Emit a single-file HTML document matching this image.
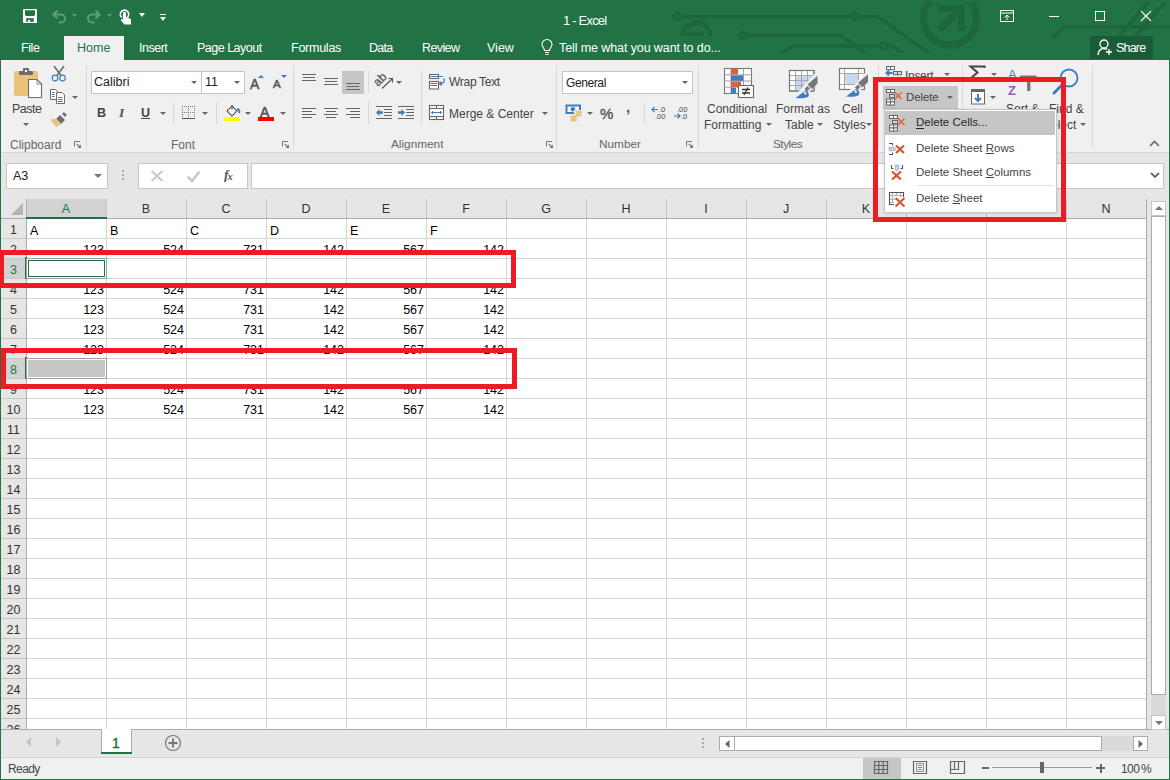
<!DOCTYPE html>
<html><head><meta charset="utf-8">
<style>
*{margin:0;padding:0;box-sizing:border-box}
html,body{width:1170px;height:780px;overflow:hidden}
body{position:relative;background:#f0f0f0;font-family:"Liberation Sans",sans-serif;font-size:12px;color:#444}
.a{position:absolute}
.t{position:absolute;white-space:nowrap;line-height:1}
svg{position:absolute;overflow:visible}
#title{left:0;top:0;width:1170px;height:60px;background:#217346}
#ribbon{left:0;top:60px;width:1170px;height:93px;background:#f0f0f0;border-bottom:1px solid #d5d5d5}
#fbar{left:0;top:153px;width:1170px;height:46px;background:#e6e6e6}
#hdr{left:0;top:199px;width:1147px;height:19px;background:#e6e6e6}
#grid{left:26px;top:218px;width:1121px;height:511px;background:#fff}
#tabs{left:0;top:729px;width:1170px;height:28px;background:#e6e6e6;border-top:1px solid #ababab}
#status{left:0;top:757px;width:1170px;height:23px;background:#f0f0f0;border-top:1px solid #d5d5d5}
#lb{left:0;top:60px;width:1px;height:720px;background:#217346}
#rb{left:1169px;top:60px;width:1px;height:720px;background:#217346}
#bb{left:0;top:779px;width:1170px;height:1px;background:#217346}
.tab{color:#fff;font-size:12.5px}
.sep{position:absolute;width:1px;background:#dadada}
.lbl{color:#666;font-size:12px}
.rt{color:#444;font-size:12.5px}
.cell{position:absolute;font-size:12.5px;color:#000;text-align:right;width:78px;line-height:1}
.rh{position:absolute;left:1px;width:25px;text-align:center;font-size:12.5px;color:#444;line-height:1}
.ch{position:absolute;top:203px;width:80px;text-align:center;font-size:12.5px;color:#444;line-height:1}
.red{position:absolute;border:5px solid #ed1c24}
.dd{position:absolute;width:0;height:0;border-left:3px solid transparent;border-right:3px solid transparent;border-top:3px solid #666}

</style></head><body>
<div id="title" class="a"></div>
<svg style="left:0;top:0" width="1170" height="60" viewBox="0 0 1170 60">
 <defs><clipPath id="tc"><rect x="0" y="2" width="1170" height="51"/></clipPath><clipPath id="tc2"><rect x="0" y="2" width="1170" height="36"/></clipPath></defs>
 <g stroke="#1e663d" stroke-width="3.6" fill="none" clip-path="url(#tc)" stroke-linejoin="round">
  <circle cx="677" cy="16.5" r="3.2" stroke-width="3"/><path d="M680.5 16.5H850.5"/><circle cx="854.4" cy="16.5" r="3.2" stroke-width="3"/><path d="M858 16.5H877.7L940 61"/>
  <path d="M683 35.9A13.5 13.5 0 0 1 710 35.9" stroke-width="5"/><path d="M687 34H704" stroke-width="4"/>
  <circle cx="742.6" cy="35.3" r="3.2" stroke-width="3"/><path d="M746 35.3H840.6L869 56"/>
  <path d="M777 56L792.7 46H879.6"/><circle cx="883.4" cy="46" r="3.2" stroke-width="3"/><path d="M887 46H893L908 57"/>
  <circle cx="950" cy="18.7" r="26.5" stroke-width="7"/>
  <path d="M939 30L961.5 8.5" stroke-width="7"/><path d="M938 8.5H961.5V31" stroke-width="7" stroke-linejoin="miter"/>
 </g>
 <g stroke="#1e663d" stroke-width="3.6" fill="none" clip-path="url(#tc2)">
  <path d="M1049 41L1064.7 27H1170M1150 0L1116 40M1167 0L1132 40"/>
 </g>
</svg>
<!-- QAT -->
<svg style="left:23px;top:9px" width="14" height="14" viewBox="0 0 14 14"><rect x="0" y="0" width="14" height="14" rx="0.8" fill="#fff"/><path d="M2 1.3H12V6L11 7H3L2 6Z" fill="#217346"/><rect x="3.2" y="9.2" width="7.6" height="3.6" fill="#217346"/><rect x="5" y="11" width="2.2" height="1.8" fill="#fff"/></svg>
<svg style="left:52px;top:9px" width="27" height="14" viewBox="0 0 27 14"><path d="M2.5 5.5H9A4 4 0 0 1 9 13.5H6.5M5.5 1.5L1.5 5.5L5.5 9.5" fill="none" stroke="#5f9c7a" stroke-width="2"/><path d="M20 5l2.5 3l2.5-3z" fill="#5f9c7a"/></svg>
<svg style="left:86px;top:9px" width="27" height="14" viewBox="0 0 27 14"><path d="M12.5 5.5H6A4 4 0 0 0 6 13.5H8.5M9.5 1.5L13.5 5.5L9.5 9.5" fill="none" stroke="#5f9c7a" stroke-width="2"/><path d="M21 5l2.5 3l2.5-3z" fill="#5f9c7a"/></svg>
<svg style="left:118px;top:8px" width="14" height="17" viewBox="0 0 14 17"><path d="M3.8 9.5A4.2 4.2 0 1 1 9.2 9.5" fill="none" stroke="#fff" stroke-width="1.6"/><path d="M5 4.5Q6.5 3 8 4.5V9L12 10.5Q13 11 13 12.5V16.5H6.5L3 12.5Q2.5 11 4 11L5 11.5Z" fill="#fff"/></svg>
<svg style="left:139px;top:13px" width="6" height="4" viewBox="0 0 6 4"><path d="M0 0H6L3 4Z" fill="#fff"/></svg>
<div class="a" style="left:160px;top:14px;width:6px;height:1px;background:#fff"></div>
<svg style="left:160px;top:17px" width="6" height="4" viewBox="0 0 6 4"><path d="M0 0H6L3 4Z" fill="#fff"/></svg>
<div class="t" style="left:563px;top:14px;color:#fff;font-size:13px;letter-spacing:-0.8px">1 - Excel</div>
<!-- window controls -->
<svg style="left:1000px;top:10px" width="14" height="12" viewBox="0 0 14 12"><rect x="0.5" y="0.5" width="13" height="11" fill="none" stroke="#fff"/><path d="M0.5 3H13.5" stroke="#fff"/><path d="M7 10V5M4.5 7.5L7 5L9.5 7.5" fill="none" stroke="#fff"/></svg>
<div class="a" style="left:1049px;top:16px;width:10px;height:1px;background:#fff"></div>
<div class="a" style="left:1095px;top:11px;width:10px;height:10px;border:1px solid #fff"></div>
<svg style="left:1141px;top:11px" width="10" height="10" viewBox="0 0 10 10"><path d="M0 0L10 10M10 0L0 10" stroke="#fff" stroke-width="1.1"/></svg>
<!-- tabs -->
<div class="t tab" style="left:21px;top:42px;letter-spacing:-0.4px">File</div>
<div class="a" style="left:64px;top:36px;width:60px;height:25px;background:#f0f0f0"></div>
<div class="t tab" style="left:77px;top:42px;color:#217346">Home</div>
<div class="t tab" style="left:139px;top:42px;letter-spacing:-0.5px">Insert</div>
<div class="t tab" style="left:197px;top:42px;letter-spacing:-0.5px">Page Layout</div>
<div class="t tab" style="left:291px;top:42px;letter-spacing:-0.25px">Formulas</div>
<div class="t tab" style="left:369px;top:42px;letter-spacing:-0.7px">Data</div>
<div class="t tab" style="left:422px;top:42px;letter-spacing:-0.6px">Review</div>
<div class="t tab" style="left:487px;top:42px">View</div>
<svg style="left:541px;top:40px" width="12" height="16" viewBox="0 0 12 16"><path d="M3.5 10.5C3.5 8 1 7 1 4.5A5 5 0 0 1 11 4.5C11 7 8.5 8 8.5 10.5Z" fill="none" stroke="#fff" stroke-width="1.1"/><path d="M4 12.5H8M4.5 14.5H7.5" stroke="#fff" stroke-width="1.1"/></svg>
<div class="t tab" style="left:559px;top:42px;letter-spacing:-0.1px">Tell me what you want to do...</div>
<div class="a" style="left:1090px;top:36px;width:63px;height:23px;background:#1a5c37"></div>
<svg style="left:1097px;top:39px" width="16" height="17" viewBox="0 0 16 17"><circle cx="7" cy="5" r="4" fill="none" stroke="#fff" stroke-width="1.3"/><path d="M1 16C1.5 11 4 9.5 7 9.5C8.5 9.5 9.5 10 10 10.5" fill="none" stroke="#fff" stroke-width="1.3"/><path d="M12 10V16M9 13H15" stroke="#fff" stroke-width="1.3"/></svg>
<div class="t tab" style="left:1116px;top:42px;letter-spacing:-0.8px">Share</div>
<div id="ribbon" class="a"></div>
<!-- Clipboard -->
<svg style="left:13px;top:67px" width="30" height="32" viewBox="0 0 30 32">
 <rect x="1" y="4" width="24" height="25" rx="2" fill="#ebc27c"/>
 <rect x="6" y="4" width="14" height="4" rx="1" fill="#6d6d6d"/>
 <rect x="10" y="1" width="6" height="4" rx="1" fill="#6d6d6d"/>
 <rect x="12" y="3" width="2" height="2" fill="#fff"/>
 <path d="M15.5 12.5H24L28.5 17V30.5H15.5Z" fill="#fff" stroke="#6d6d6d" stroke-width="1.1"/>
 <path d="M24 12.5V17H28.5" fill="none" stroke="#6d6d6d" stroke-width="0.8"/>
</svg>
<div class="t rt" style="left:12px;top:103px;letter-spacing:-0.5px">Paste</div>
<div class="dd" style="left:23px;top:123px"></div>
<svg style="left:51px;top:65px" width="16" height="17" viewBox="0 0 16 17">
 <path d="M3 1L10 10.5M13 1L6 10.5" stroke="#6d6d6d" stroke-width="1.6"/>
 <circle cx="4" cy="13" r="2.8" fill="none" stroke="#3f7dbf" stroke-width="1.2"/>
 <circle cx="11.5" cy="13" r="2.8" fill="none" stroke="#3f7dbf" stroke-width="1.2"/>
</svg>
<svg style="left:50px;top:89px" width="16" height="16" viewBox="0 0 16 16">
 <path d="M0.5 0.5H5.5L7.5 2.5V10.5H0.5Z" fill="#fff" stroke="#6d6d6d"/>
 <path d="M6.5 3.5H12L14.5 6V14.5H6.5Z" fill="#fff" stroke="#6d6d6d"/>
 <path d="M2 3.5H4.5M2 5.5H4.5M2 7.5H4.5M8 8.5H12.5M8 10.5H12.5M8 12.5H12.5" stroke="#3f7dbf" stroke-width="1"/>
</svg>
<div class="dd" style="left:72px;top:96px"></div>
<svg style="left:50px;top:112px" width="17" height="16" viewBox="0 0 17 16">
 <path d="M10 3L15 8L11 12L6 7Z" fill="#6d6d6d"/>
 <path d="M13 1L16 4" stroke="#6d6d6d" stroke-width="2.5"/>
 <path d="M6 6.5L11.5 12L6.5 15L0 7.5Z" fill="#ebc27c"/>
</svg>
<div class="t lbl" style="left:10px;top:139px">Clipboard</div>
<svg style="left:74px;top:141px" width="8" height="8" viewBox="0 0 8 8"><path d="M0.5 5.5V0.5H6" fill="none" stroke="#777"/><path d="M3 3L6 6" stroke="#777" stroke-width="1.2"/><path d="M3.5 7H7V3.5Z" fill="#777"/></svg>
<div class="sep" style="left:86px;top:65px;height:83px"></div>
<!-- Font -->
<div class="a" style="left:91px;top:71px;width:111px;height:23px;background:#fff;border:1px solid #c6c6c6"></div>
<div class="t rt" style="left:94px;top:76px;color:#222">Calibri</div>
<div class="dd" style="left:191px;top:81px"></div>
<div class="a" style="left:201px;top:71px;width:44px;height:23px;background:#fff;border:1px solid #c6c6c6"></div>
<div class="t rt" style="left:205px;top:76px;color:#222">11</div>
<div class="dd" style="left:234px;top:81px"></div>
<div class="t" style="left:250px;top:77px;font-size:14px;color:#555;-webkit-text-stroke:0.5px #555">A</div>
<svg style="left:258px;top:75px" width="6" height="3" viewBox="0 0 6 3"><path d="M0 3L3 0L6 3Z" fill="#3f7dbf"/></svg>
<div class="t" style="left:273px;top:79px;font-size:11.5px;color:#555;-webkit-text-stroke:0.5px #555">A</div>
<svg style="left:281px;top:75px" width="6" height="3" viewBox="0 0 6 3"><path d="M0 0L3 3L6 0Z" fill="#3f7dbf"/></svg>
<div class="t" style="left:97px;top:107px;font-size:12.5px;font-weight:bold;color:#444">B</div>
<div class="t" style="left:119px;top:106px;font-size:13.5px;font-style:italic;font-weight:bold;font-family:'Liberation Serif',serif;color:#555">I</div>
<div class="t" style="left:141px;top:107px;font-size:12.5px;font-weight:bold;color:#444">U</div>
<div class="a" style="left:141px;top:118px;width:9px;height:1px;background:#444"></div>
<div class="dd" style="left:160px;top:112px"></div>
<div class="sep" style="left:173px;top:102px;height:22px"></div>
<svg style="left:182px;top:106px" width="14" height="14" viewBox="0 0 14 14">
 <path d="M0.5 0V12M6.5 0V12M12.5 0V12M0 0.5H13M0 6.5H13" fill="none" stroke="#777" stroke-dasharray="1 1"/>
 <path d="M0 12.5H13" stroke="#555"/>
</svg>
<div class="dd" style="left:202px;top:112px"></div>
<div class="sep" style="left:216px;top:102px;height:22px"></div>
<svg style="left:224px;top:104px" width="17" height="17" viewBox="0 0 17 17">
 <path d="M8 2L13 7L8 12L3 7Z" fill="#fff" stroke="#555" stroke-width="1.1"/>
 <path d="M8 1V6" stroke="#555"/>
 <path d="M13 5C15 5 16 7 15 9" fill="none" stroke="#3f7dbf" stroke-width="2"/>
 <rect x="0" y="13" width="16" height="4" fill="#ffff00"/>
</svg>
<div class="dd" style="left:245px;top:112px"></div>
<div class="t" style="left:260px;top:105px;font-size:14px;color:#555;-webkit-text-stroke:0.6px #555">A</div>
<div class="a" style="left:258px;top:117px;width:16px;height:4px;background:#ff0000"></div>
<div class="dd" style="left:280px;top:112px"></div>
<div class="t lbl" style="left:171px;top:139px">Font</div>
<svg style="left:282px;top:141px" width="8" height="8" viewBox="0 0 8 8"><path d="M0.5 5.5V0.5H6" fill="none" stroke="#777"/><path d="M3 3L6 6" stroke="#777" stroke-width="1.2"/><path d="M3.5 7H7V3.5Z" fill="#777"/></svg>
<div class="sep" style="left:293px;top:65px;height:83px"></div>
<!-- Alignment -->
<svg style="left:300px;top:70px" width="66" height="52" viewBox="0 0 66 52">
 <rect x="42" y="1" width="22" height="23" fill="#c6c6c6"/>
 <g stroke="#666" stroke-width="1.2">
 <path d="M2 4.5H16M3 7.5H15M2 10.5H16"/>
 <path d="M24 8.5H38M25 11.5H37M24 14.5H38"/>
 <path d="M46 13.5H60M47 16.5H59M46 19.5H60"/>
 <path d="M2 38.5H16M2 41.5H12M2 44.5H16M2 47.5H12"/>
 <path d="M24 38.5H38M26 41.5H36M24 44.5H38M26 47.5H36"/>
 <path d="M46 38.5H60M50 41.5H60M46 44.5H60M50 47.5H60"/>
 </g>
</svg>
<div class="sep" style="left:368px;top:71px;height:22px"></div>
<div class="sep" style="left:368px;top:101px;height:23px"></div>
<svg style="left:375px;top:73px" width="20" height="17" viewBox="0 0 20 17">
 <text x="0" y="0" transform="translate(3 14) rotate(-45)" font-family="Liberation Sans" font-size="12" fill="#555" stroke="#555" stroke-width="0.3" style="-webkit-font-smoothing:antialiased">ab</text>
 <path d="M7 15.5L17 6M13.5 5.5H17.5V9.5" fill="none" stroke="#555" stroke-width="1.1"/>
</svg>
<div class="dd" style="left:396px;top:81px"></div>
<svg style="left:375px;top:105px" width="40" height="15" viewBox="0 0 40 15">
 <g stroke="#666" stroke-width="1.1"><path d="M1 1.5H17M9 4.5H17M9 7.5H17M9 10.5H17M1 13.5H17"/>
 <path d="M23 1.5H39M31 4.5H39M31 7.5H39M31 10.5H39M23 13.5H39"/></g>
 <path d="M1 7.5L4.5 4V6.2H8V8.8H4.5V11Z" fill="#3f7dbf"/>
 <path d="M30 7.5L26.5 4V6.2H23V8.8H26.5V11Z" fill="#3f7dbf"/>
</svg>
<div class="sep" style="left:421px;top:70px;height:55px"></div>
<svg style="left:428px;top:73px" width="18" height="17" viewBox="0 0 18 17">
 <rect x="1.5" y="1.5" width="9" height="4" fill="#fff" stroke="#666" stroke-width="1.1"/>
 <rect x="1.5" y="8.5" width="9" height="7.5" fill="#fff" stroke="#666" stroke-width="1.1"/>
 <path d="M2.5 3.5H15M2.5 10.5H9M2.5 12.5H9" stroke="#3f7dbf" stroke-width="1"/>
 <path d="M15.5 5.5C17 7 16.5 10.5 13.5 10.5H11.5M13.5 8.5L11.5 10.5L13.5 12.5" fill="none" stroke="#3f7dbf" stroke-width="1.3"/>
</svg>
<div class="t rt" style="left:449px;top:76px;font-size:12px;letter-spacing:-0.3px">Wrap Text</div>
<svg style="left:428px;top:104px" width="17" height="17" viewBox="0 0 17 17">
 <rect x="1.5" y="1.5" width="14" height="14" fill="#fff" stroke="#666" stroke-width="1.1"/>
 <path d="M1.5 4.5H15.5M1.5 12.5H15.5M8.5 1.5V4.5M8.5 12.5V15.5" stroke="#666" stroke-width="1.1"/>
 <path d="M3.5 8.5H13.5M5 7L3.5 8.5L5 10M12 7L13.5 8.5L12 10" fill="none" stroke="#3f7dbf" stroke-width="1"/>
</svg>
<div class="t rt" style="left:449px;top:108px;font-size:12px">Merge &amp; Center</div>
<div class="dd" style="left:542px;top:112px"></div>
<div class="t lbl" style="left:391px;top:139px;font-size:11.8px">Alignment</div>
<svg style="left:546px;top:141px" width="8" height="8" viewBox="0 0 8 8"><path d="M0.5 5.5V0.5H6" fill="none" stroke="#777"/><path d="M3 3L6 6" stroke="#777" stroke-width="1.2"/><path d="M3.5 7H7V3.5Z" fill="#777"/></svg>
<div class="sep" style="left:556px;top:65px;height:83px"></div>
<!-- Number -->
<div class="a" style="left:562px;top:71px;width:131px;height:23px;background:#fff;border:1px solid #c6c6c6"></div>
<div class="t rt" style="left:566px;top:77px;color:#222;font-size:12px;letter-spacing:-0.4px">General</div>
<div class="dd" style="left:682px;top:81px"></div>
<svg style="left:565px;top:104px" width="18" height="18" viewBox="0 0 18 18">
 <rect x="0.5" y="0.5" width="15.5" height="9.5" fill="#3f7dbf"/>
 <rect x="2.5" y="2.5" width="11.5" height="5.5" fill="#fff"/>
 <circle cx="8" cy="5.2" r="2.3" fill="#3f7dbf"/>
 <rect x="9" y="6" width="8" height="11" fill="#f0f0f0"/>
 <ellipse cx="13.5" cy="8" rx="3.5" ry="1.6" fill="#ebc27c"/><ellipse cx="13.5" cy="11" rx="3.5" ry="1.6" fill="#ebc27c"/>
 <ellipse cx="8.5" cy="13" rx="3.5" ry="1.6" fill="#ebc27c"/><ellipse cx="8.5" cy="16" rx="3.5" ry="1.6" fill="#ebc27c"/>
</svg>
<div class="dd" style="left:587px;top:112px"></div>
<div class="t" style="left:600px;top:106px;font-size:15px;color:#555;-webkit-text-stroke:0.4px #555">%</div>
<div class="t" style="left:626px;top:99px;font-size:15px;font-weight:bold;color:#555">,</div>
<div class="sep" style="left:644px;top:102px;height:22px"></div>
<svg style="left:651px;top:105px" width="40" height="15" viewBox="0 0 40 15">
 <text x="8" y="6.5" font-family="Liberation Sans" font-size="7.5" fill="#444">.0</text>
 <text x="4" y="13.5" font-family="Liberation Sans" font-size="7.5" fill="#444">.00</text>
 <path d="M1 4.5H7M3.5 2L1 4.5L3.5 7" fill="none" stroke="#3f7dbf" stroke-width="1.2"/>
 <text x="26" y="6.5" font-family="Liberation Sans" font-size="7.5" fill="#444">.00</text>
 <text x="30" y="13.5" font-family="Liberation Sans" font-size="7.5" fill="#444">.0</text>
 <path d="M23 11H29M26.5 8.5L29 11L26.5 13.5" fill="none" stroke="#3f7dbf" stroke-width="1.2"/>
</svg>
<div class="t lbl" style="left:599px;top:139px;font-size:11.8px">Number</div>
<svg style="left:686px;top:141px" width="8" height="8" viewBox="0 0 8 8"><path d="M0.5 5.5V0.5H6" fill="none" stroke="#777"/><path d="M3 3L6 6" stroke="#777" stroke-width="1.2"/><path d="M3.5 7H7V3.5Z" fill="#777"/></svg>
<div class="sep" style="left:698px;top:65px;height:83px"></div>
<!-- Styles -->
<svg style="left:723px;top:67px" width="32" height="32" viewBox="0 0 32 32">
 <rect x="1.5" y="1.5" width="27" height="25" fill="#fff" stroke="#777" stroke-width="1.1"/>
 <path d="M1.5 7.8H28.5M1.5 14H28.5M1.5 20.2H28.5M8 1.5V26.5M20.5 1.5V26.5" stroke="#a0a0a0" stroke-width="1"/>
 <rect x="8" y="2" width="7" height="5.5" fill="#e0603a"/>
 <rect x="8" y="8.3" width="12" height="5.5" fill="#3f7dbf"/>
 <rect x="8" y="14.5" width="10" height="5.5" fill="#e0603a"/>
 <rect x="8" y="20.7" width="5" height="5.5" fill="#3f7dbf"/>
 <rect x="15.5" y="18.5" width="15" height="12" fill="#fff" stroke="#666" stroke-width="1.1"/>
 <path d="M19 22.5H27M19 26H27M25 20.5L21 28" stroke="#333" stroke-width="1.3"/>
</svg>
<div class="t rt" style="left:707px;top:103px;font-size:12px">Conditional</div>
<div class="t rt" style="left:704px;top:119px;font-size:12px">Formatting</div>
<div class="dd" style="left:766px;top:123px"></div>
<svg style="left:788px;top:69px" width="32" height="31" viewBox="0 0 32 31">
 <rect x="1.5" y="1.5" width="24.5" height="20.5" fill="#fff" stroke="#777" stroke-width="1.1"/>
 <rect x="8" y="7" width="18" height="15" fill="#c5d9f1"/>
 <path d="M7.5 2V22M13.5 2V22M19.5 2V22M2 6.5H26M2 11.5H26M2 16.5H26" stroke="#a8a8a8" stroke-width="1"/>
 <rect x="1.5" y="1.5" width="24.5" height="20.5" fill="none" stroke="#777" stroke-width="1.1"/>
 <path d="M31.5 5.5L12.5 26.5" stroke="#f0f0f0" stroke-width="8"/>
 <path d="M29.5 6.8V14.4L24 20L19.5 15.5Z" fill="#777"/>
 <path d="M22 19.5L19 22.5L16.5 20L19.5 17Z" fill="#777"/>
 <path d="M17.5 21.5A4.5 4.5 0 0 1 20.5 27.5Q17 30 7.5 29Z" fill="#3f7dbf"/>
 <path d="M15.5 23.5Q17 22 18.5 24L17.5 26Z" fill="#fff"/>
</svg>
<div class="t rt" style="left:776px;top:103px;font-size:12px">Format as</div>
<div class="t rt" style="left:785px;top:119px;font-size:12px">Table</div>
<div class="dd" style="left:817px;top:123px"></div>
<svg style="left:838px;top:67px" width="32" height="30" viewBox="0 0 32 30">
 <rect x="1.5" y="1.5" width="25" height="21" fill="#fff" stroke="#777" stroke-width="1.1"/>
 <rect x="6.5" y="6.5" width="14" height="11" fill="#c5d9f1"/>
 <path d="M1.5 6.5H26.5M1.5 17.5H26.5M6.5 1.5V22.5M20.5 1.5V22.5" stroke="#a8a8a8" stroke-width="1"/>
 <rect x="1.5" y="1.5" width="25" height="21" fill="none" stroke="#777" stroke-width="1.1"/>
 <path d="M32.5 6L13.5 27" stroke="#f0f0f0" stroke-width="8"/>
 <path d="M30 7.3V14.9L24.5 20.5L20 16Z" fill="#777"/>
 <path d="M22.5 20L19.5 23L17 20.5L20 17.5Z" fill="#777"/>
 <path d="M18 22A4.5 4.5 0 0 1 21 28Q17.5 30.5 8 29.5Z" fill="#3f7dbf"/>
 <path d="M16 24Q17.5 22.5 19 24.5L18 26.5Z" fill="#fff"/>
</svg>
<div class="t rt" style="left:842px;top:103px;font-size:12px">Cell</div>
<div class="t rt" style="left:833px;top:119px;font-size:12px">Styles</div>
<div class="dd" style="left:866px;top:123px"></div>
<div class="t lbl" style="left:773px;top:139px;font-size:11.8px;letter-spacing:-0.5px">Styles</div>
<div class="sep" style="left:878px;top:65px;height:83px"></div>
<!-- Cells -->
<svg style="left:885px;top:65px" width="18" height="14" viewBox="0 0 18 14">
 <rect x="1.5" y="1.5" width="4" height="3.2" fill="#fff" stroke="#666"/><rect x="5.5" y="1.5" width="4" height="3.2" fill="#fff" stroke="#666"/>
 <rect x="8.5" y="6.5" width="4" height="3.2" fill="#c9ddf2" stroke="#666"/><rect x="12.5" y="6.5" width="4" height="3.2" fill="#c9ddf2" stroke="#666"/>
 <path d="M1.5 8H7.5M4 5.5L1.5 8L4 10.5" fill="none" stroke="#3f7dbf" stroke-width="1.8"/>
 <path d="M1.5 11.5V13M4 13H6" stroke="#888" stroke-width="0.8"/>
</svg>
<div class="t rt" style="left:905px;top:70px;font-size:12px;letter-spacing:-0.3px">Insert</div>
<div class="dd" style="left:944px;top:73px"></div>
<div class="a" style="left:883px;top:86px;width:75px;height:23px;background:#c6c6c6"></div>
<svg style="left:885px;top:88px" width="18" height="18" viewBox="0 0 18 18">
 <rect x="1.5" y="1.5" width="4" height="3" fill="#fff" stroke="#666"/><rect x="5.5" y="1.5" width="4" height="3" fill="#fff" stroke="#666"/>
 <rect x="4.5" y="6.5" width="5" height="3" fill="#c9ddf2" stroke="#666"/>
 <rect x="1.5" y="11" width="4" height="3" fill="#fff" stroke="#666"/><rect x="5.5" y="11" width="4" height="3" fill="#fff" stroke="#666"/>
 <rect x="1.5" y="14" width="4" height="3" fill="#fff" stroke="#666"/><rect x="5.5" y="14" width="4" height="3" fill="#fff" stroke="#666"/>
 <path d="M10 4.5L16.5 11M16.5 4.5L10 11" stroke="#e0603a" stroke-width="1.5"/>
</svg>
<div class="t rt" style="left:906px;top:92px;font-size:11.3px">Delete</div>
<div class="dd" style="left:947px;top:96px"></div>
<!-- Editing -->
<div class="sep" style="left:962px;top:65px;height:83px"></div>
<svg style="left:969px;top:65px" width="17" height="14" viewBox="0 0 17 14"><path d="M15.5 3V1.5H1.5L8.5 7.5L1.5 13.5H15.5V12" fill="none" stroke="#444" stroke-width="2"/></svg>
<div class="dd" style="left:991px;top:73px"></div>
<svg style="left:970px;top:88px" width="16" height="17" viewBox="0 0 16 17">
 <rect x="1.5" y="1.5" width="13" height="14.5" fill="#fff" stroke="#666"/>
 <rect x="1" y="1" width="14" height="3" fill="#666"/>
 <path d="M8 6V13M5 10L8 13L11 10" fill="none" stroke="#3f7dbf" stroke-width="2"/>
</svg>
<div class="dd" style="left:990px;top:96px"></div>
<div class="t" style="left:1008px;top:68px;font-size:13px;color:#3f7dbf">A</div>
<div class="t" style="left:1008px;top:84px;font-size:13px;color:#9b59c0;font-weight:bold">Z</div>
<svg style="left:1020px;top:75px" width="17" height="16" viewBox="0 0 17 16"><path d="M0 1.5H16.5M4.5 2L8 7V15H9.5V7L13 2" fill="none" stroke="#777" stroke-width="1.8"/></svg>
<svg style="left:1051px;top:67px" width="30" height="30" viewBox="0 0 30 30">
 <circle cx="18" cy="11" r="8.5" fill="none" stroke="#3f7dbf" stroke-width="1.8"/>
 <path d="M12 17L3 26" stroke="#3f7dbf" stroke-width="3" stroke-linecap="round"/>
</svg>
<div class="t rt" style="left:1006px;top:103px;font-size:12px">Sort &amp;</div>
<div class="t rt" style="left:1049px;top:103px;font-size:12px">Find &amp;</div>
<div class="t rt" style="left:1043px;top:119px;font-size:12px">Select</div>
<div class="dd" style="left:1080px;top:123px"></div>
<div class="sep" style="left:1092px;top:65px;height:83px"></div>
<svg style="left:1149px;top:140px" width="11" height="7" viewBox="0 0 11 7"><path d="M1 6L5.5 1.5L10 6" fill="none" stroke="#666" stroke-width="1.6"/></svg>
<div id="fbar" class="a"></div>
<div id="hdr" class="a"></div>
<div id="grid" class="a"></div>
<div class="a" style="left:0;top:218px;width:26px;height:511px;background:#e6e6e6"></div>
<svg style="left:0;top:0" width="1170" height="780" viewBox="0 0 1170 780">
<path d="M26 238.5H1147" stroke="#d4d4d4"/>
<path d="M26 258.5H1147" stroke="#d4d4d4"/>
<path d="M26 278.5H1147" stroke="#d4d4d4"/>
<path d="M26 298.5H1147" stroke="#d4d4d4"/>
<path d="M26 318.5H1147" stroke="#d4d4d4"/>
<path d="M26 338.5H1147" stroke="#d4d4d4"/>
<path d="M26 358.5H1147" stroke="#d4d4d4"/>
<path d="M26 378.5H1147" stroke="#d4d4d4"/>
<path d="M26 398.5H1147" stroke="#d4d4d4"/>
<path d="M26 418.5H1147" stroke="#d4d4d4"/>
<path d="M26 438.5H1147" stroke="#d4d4d4"/>
<path d="M26 458.5H1147" stroke="#d4d4d4"/>
<path d="M26 478.5H1147" stroke="#d4d4d4"/>
<path d="M26 498.5H1147" stroke="#d4d4d4"/>
<path d="M26 518.5H1147" stroke="#d4d4d4"/>
<path d="M26 538.5H1147" stroke="#d4d4d4"/>
<path d="M26 558.5H1147" stroke="#d4d4d4"/>
<path d="M26 578.5H1147" stroke="#d4d4d4"/>
<path d="M26 598.5H1147" stroke="#d4d4d4"/>
<path d="M26 618.5H1147" stroke="#d4d4d4"/>
<path d="M26 638.5H1147" stroke="#d4d4d4"/>
<path d="M26 658.5H1147" stroke="#d4d4d4"/>
<path d="M26 678.5H1147" stroke="#d4d4d4"/>
<path d="M26 698.5H1147" stroke="#d4d4d4"/>
<path d="M26 718.5H1147" stroke="#d4d4d4"/>
<path d="M106.5 218V729" stroke="#d4d4d4"/>
<path d="M186.5 218V729" stroke="#d4d4d4"/>
<path d="M266.5 218V729" stroke="#d4d4d4"/>
<path d="M346.5 218V729" stroke="#d4d4d4"/>
<path d="M426.5 218V729" stroke="#d4d4d4"/>
<path d="M506.5 218V729" stroke="#d4d4d4"/>
<path d="M586.5 218V729" stroke="#d4d4d4"/>
<path d="M666.5 218V729" stroke="#d4d4d4"/>
<path d="M746.5 218V729" stroke="#d4d4d4"/>
<path d="M826.5 218V729" stroke="#d4d4d4"/>
<path d="M906.5 218V729" stroke="#d4d4d4"/>
<path d="M986.5 218V729" stroke="#d4d4d4"/>
<path d="M1066.5 218V729" stroke="#d4d4d4"/>
<path d="M1146.5 218V729" stroke="#d4d4d4"/>
<path d="M106.5 199V218" stroke="#c6c6c6"/>
<path d="M186.5 199V218" stroke="#c6c6c6"/>
<path d="M266.5 199V218" stroke="#c6c6c6"/>
<path d="M346.5 199V218" stroke="#c6c6c6"/>
<path d="M426.5 199V218" stroke="#c6c6c6"/>
<path d="M506.5 199V218" stroke="#c6c6c6"/>
<path d="M586.5 199V218" stroke="#c6c6c6"/>
<path d="M666.5 199V218" stroke="#c6c6c6"/>
<path d="M746.5 199V218" stroke="#c6c6c6"/>
<path d="M826.5 199V218" stroke="#c6c6c6"/>
<path d="M906.5 199V218" stroke="#c6c6c6"/>
<path d="M986.5 199V218" stroke="#c6c6c6"/>
<path d="M1066.5 199V218" stroke="#c6c6c6"/>
<path d="M1 238.5H26" stroke="#c6c6c6"/>
<path d="M1 258.5H26" stroke="#c6c6c6"/>
<path d="M1 278.5H26" stroke="#c6c6c6"/>
<path d="M1 298.5H26" stroke="#c6c6c6"/>
<path d="M1 318.5H26" stroke="#c6c6c6"/>
<path d="M1 338.5H26" stroke="#c6c6c6"/>
<path d="M1 358.5H26" stroke="#c6c6c6"/>
<path d="M1 378.5H26" stroke="#c6c6c6"/>
<path d="M1 398.5H26" stroke="#c6c6c6"/>
<path d="M1 418.5H26" stroke="#c6c6c6"/>
<path d="M1 438.5H26" stroke="#c6c6c6"/>
<path d="M1 458.5H26" stroke="#c6c6c6"/>
<path d="M1 478.5H26" stroke="#c6c6c6"/>
<path d="M1 498.5H26" stroke="#c6c6c6"/>
<path d="M1 518.5H26" stroke="#c6c6c6"/>
<path d="M1 538.5H26" stroke="#c6c6c6"/>
<path d="M1 558.5H26" stroke="#c6c6c6"/>
<path d="M1 578.5H26" stroke="#c6c6c6"/>
<path d="M1 598.5H26" stroke="#c6c6c6"/>
<path d="M1 618.5H26" stroke="#c6c6c6"/>
<path d="M1 638.5H26" stroke="#c6c6c6"/>
<path d="M1 658.5H26" stroke="#c6c6c6"/>
<path d="M1 678.5H26" stroke="#c6c6c6"/>
<path d="M1 698.5H26" stroke="#c6c6c6"/>
<path d="M1 718.5H26" stroke="#c6c6c6"/>
<path d="M26.5 199V729" stroke="#ababab"/>
<path d="M1 218.5H1147" stroke="#ababab"/>
<path d="M1146.5 199V729" stroke="#ababab"/>
</svg>
<svg style="left:11px;top:203px" width="12" height="12" viewBox="0 0 12 12"><path d="M12 0V12H0Z" fill="#b4b4b4"/></svg>
<div class="a" style="left:27px;top:199px;width:79px;height:18px;background:#d2d2d2"></div>
<div class="a" style="left:26px;top:217px;width:81px;height:2px;background:#217346"></div>
<div class="ch" style="left:26px;color:#217346">A</div>
<div class="ch" style="left:106px;color:#333">B</div>
<div class="ch" style="left:186px;color:#333">C</div>
<div class="ch" style="left:266px;color:#333">D</div>
<div class="ch" style="left:346px;color:#333">E</div>
<div class="ch" style="left:426px;color:#333">F</div>
<div class="ch" style="left:506px;color:#333">G</div>
<div class="ch" style="left:586px;color:#333">H</div>
<div class="ch" style="left:666px;color:#333">I</div>
<div class="ch" style="left:746px;color:#333">J</div>
<div class="ch" style="left:826px;color:#333">K</div>
<div class="ch" style="left:906px;color:#333">L</div>
<div class="ch" style="left:986px;color:#333">M</div>
<div class="ch" style="left:1066px;color:#333">N</div>
<div class="rh" style="top:224px;color:#333">1</div>
<div class="rh" style="top:244px;color:#333">2</div>
<div class="a" style="left:1px;top:259px;width:25px;height:19px;background:#d2d2d2"></div>
<div class="a" style="left:25px;top:257px;width:2px;height:22px;background:#217346"></div>
<div class="rh" style="top:264px;color:#217346">3</div>
<div class="rh" style="top:284px;color:#333">4</div>
<div class="rh" style="top:304px;color:#333">5</div>
<div class="rh" style="top:324px;color:#333">6</div>
<div class="rh" style="top:344px;color:#333">7</div>
<div class="a" style="left:1px;top:359px;width:25px;height:19px;background:#d2d2d2"></div>
<div class="a" style="left:25px;top:357px;width:2px;height:22px;background:#217346"></div>
<div class="rh" style="top:364px;color:#217346">8</div>
<div class="rh" style="top:384px;color:#333">9</div>
<div class="rh" style="top:404px;color:#333">10</div>
<div class="rh" style="top:424px;color:#333">11</div>
<div class="rh" style="top:444px;color:#333">12</div>
<div class="rh" style="top:464px;color:#333">13</div>
<div class="rh" style="top:484px;color:#333">14</div>
<div class="rh" style="top:504px;color:#333">15</div>
<div class="rh" style="top:524px;color:#333">16</div>
<div class="rh" style="top:544px;color:#333">17</div>
<div class="rh" style="top:564px;color:#333">18</div>
<div class="rh" style="top:584px;color:#333">19</div>
<div class="rh" style="top:604px;color:#333">20</div>
<div class="rh" style="top:624px;color:#333">21</div>
<div class="rh" style="top:644px;color:#333">22</div>
<div class="rh" style="top:664px;color:#333">23</div>
<div class="rh" style="top:684px;color:#333">24</div>
<div class="rh" style="top:704px;color:#333">25</div>
<div class="rh" style="top:724px;color:#333">26</div>
<div class="t" style="left:30px;top:225px;font-size:12.5px;color:#000">A</div>
<div class="t" style="left:110px;top:225px;font-size:12.5px;color:#000">B</div>
<div class="t" style="left:190px;top:225px;font-size:12.5px;color:#000">C</div>
<div class="t" style="left:270px;top:225px;font-size:12.5px;color:#000">D</div>
<div class="t" style="left:350px;top:225px;font-size:12.5px;color:#000">E</div>
<div class="t" style="left:430px;top:225px;font-size:12.5px;color:#000">F</div>
<div class="cell" style="left:26px;top:244px">123</div>
<div class="cell" style="left:106px;top:244px">524</div>
<div class="cell" style="left:186px;top:244px">731</div>
<div class="cell" style="left:266px;top:244px">142</div>
<div class="cell" style="left:346px;top:244px">567</div>
<div class="cell" style="left:426px;top:244px">142</div>
<div class="cell" style="left:26px;top:284px">123</div>
<div class="cell" style="left:106px;top:284px">524</div>
<div class="cell" style="left:186px;top:284px">731</div>
<div class="cell" style="left:266px;top:284px">142</div>
<div class="cell" style="left:346px;top:284px">567</div>
<div class="cell" style="left:426px;top:284px">142</div>
<div class="cell" style="left:26px;top:304px">123</div>
<div class="cell" style="left:106px;top:304px">524</div>
<div class="cell" style="left:186px;top:304px">731</div>
<div class="cell" style="left:266px;top:304px">142</div>
<div class="cell" style="left:346px;top:304px">567</div>
<div class="cell" style="left:426px;top:304px">142</div>
<div class="cell" style="left:26px;top:324px">123</div>
<div class="cell" style="left:106px;top:324px">524</div>
<div class="cell" style="left:186px;top:324px">731</div>
<div class="cell" style="left:266px;top:324px">142</div>
<div class="cell" style="left:346px;top:324px">567</div>
<div class="cell" style="left:426px;top:324px">142</div>
<div class="cell" style="left:26px;top:344px">123</div>
<div class="cell" style="left:106px;top:344px">524</div>
<div class="cell" style="left:186px;top:344px">731</div>
<div class="cell" style="left:266px;top:344px">142</div>
<div class="cell" style="left:346px;top:344px">567</div>
<div class="cell" style="left:426px;top:344px">142</div>
<div class="cell" style="left:26px;top:384px">123</div>
<div class="cell" style="left:106px;top:384px">524</div>
<div class="cell" style="left:186px;top:384px">731</div>
<div class="cell" style="left:266px;top:384px">142</div>
<div class="cell" style="left:346px;top:384px">567</div>
<div class="cell" style="left:426px;top:384px">142</div>
<div class="cell" style="left:26px;top:404px">123</div>
<div class="cell" style="left:106px;top:404px">524</div>
<div class="cell" style="left:186px;top:404px">731</div>
<div class="cell" style="left:266px;top:404px">142</div>
<div class="cell" style="left:346px;top:404px">567</div>
<div class="cell" style="left:426px;top:404px">142</div>
<div class="a" style="left:26px;top:258px;width:81px;height:21px;border:1px solid #a0a0a0"></div>
<div class="a" style="left:28px;top:260px;width:77px;height:17px;border:1px solid #217346"></div>
<div class="a" style="left:26px;top:358px;width:81px;height:21px;border:1px solid #a0a0a0"></div>
<div class="a" style="left:28px;top:360px;width:77px;height:17px;background:#c6c6c6"></div>
<div id="tabs" class="a"></div><div class="a" style="left:6px;top:163px;width:102px;height:26px;background:#fff;border:1px solid #c6c6c6"></div>
<div class="t" style="left:13px;top:170px;font-size:12.5px;color:#222">A3</div>
<div class="a" style="left:94px;top:174px;border-left:4px solid transparent;border-right:4px solid transparent;border-top:4px solid #777"></div>
<div class="a" style="left:122px;top:170px;width:2px;height:2px;background:#aaa"></div>
<div class="a" style="left:122px;top:174px;width:2px;height:2px;background:#aaa"></div>
<div class="a" style="left:122px;top:178px;width:2px;height:2px;background:#aaa"></div>
<div class="a" style="left:138px;top:163px;width:110px;height:26px;background:#fff;border:1px solid #c6c6c6"></div>
<svg style="left:151px;top:171px" width="12" height="10" viewBox="0 0 12 10"><path d="M0.5 0L11.5 10M11.5 0L0.5 10" stroke="#c8c8c8" stroke-width="1.9"/></svg>
<svg style="left:186px;top:170px" width="15" height="13" viewBox="0 0 15 13"><path d="M1.5 6.5L6 11L13.5 1.5" fill="none" stroke="#c8c8c8" stroke-width="2.6"/></svg>
<div class="t" style="left:224px;top:168px;font-family:'Liberation Serif',serif;font-style:italic;font-weight:bold;font-size:13.5px;color:#555">f<span style="font-size:10.5px;position:relative;top:1px;left:-1px">x</span></div>
<div class="a" style="left:251px;top:163px;width:913px;height:26px;background:#fff;border:1px solid #c6c6c6"></div>
<svg style="left:1150px;top:172px" width="10" height="7" viewBox="0 0 10 7"><path d="M1 1L5 5L9 1" fill="none" stroke="#666" stroke-width="1.8"/></svg>
<!-- vertical scrollbar -->
<div class="a" style="left:1147px;top:199px;width:22px;height:530px;background:#e6e6e6"></div>
<div class="a" style="left:1151px;top:201px;width:15px;height:15px;background:#fff;border:1px solid #c6c6c6"></div>
<div class="a" style="left:1155px;top:206px;border-left:4px solid transparent;border-right:4px solid transparent;border-bottom:4px solid #777"></div>
<div class="a" style="left:1151px;top:216px;width:15px;height:499px;background:#dadada"></div>
<div class="a" style="left:1151px;top:216px;width:15px;height:479px;background:#fff;border:1px solid #ababab"></div>
<div class="a" style="left:1151px;top:715px;width:15px;height:15px;background:#fff;border:1px solid #c6c6c6"></div>
<div class="a" style="left:1155px;top:721px;border-left:4px solid transparent;border-right:4px solid transparent;border-top:4px solid #777"></div>
<div id="status" class="a"></div>
<!-- sheet tab bar -->
<svg style="left:26px;top:737px" width="6" height="10" viewBox="0 0 6 10"><path d="M5 0V10L0 5Z" fill="#c4c4c4"/></svg>
<svg style="left:56px;top:737px" width="6" height="10" viewBox="0 0 6 10"><path d="M0 0V10L5 5Z" fill="#c4c4c4"/></svg>
<div class="a" style="left:101px;top:729px;width:31px;height:24px;background:#fff;border-left:1px solid #ababab;border-right:1px solid #ababab"></div>
<div class="a" style="left:101px;top:752px;width:31px;height:2px;background:#217346"></div>
<div class="t" style="left:112px;top:736px;font-size:14px;color:#217346;-webkit-text-stroke:0.4px #217346">1</div>
<svg style="left:164px;top:734px" width="18" height="18" viewBox="0 0 18 18"><circle cx="9" cy="9" r="7.5" fill="none" stroke="#777" stroke-width="1.2"/><path d="M9 4.5V13.5M4.5 9H13.5" stroke="#777" stroke-width="1.8"/></svg>
<div class="a" style="left:702px;top:738px;width:2px;height:2px;background:#aaa"></div>
<div class="a" style="left:702px;top:742px;width:2px;height:2px;background:#aaa"></div>
<div class="a" style="left:702px;top:746px;width:2px;height:2px;background:#aaa"></div>
<div class="a" style="left:719px;top:736px;width:428px;height:15px;background:#dadada"></div>
<div class="a" style="left:719px;top:736px;width:16px;height:15px;background:#fff;border:1px solid #ababab"></div>
<svg style="left:725px;top:740px" width="5" height="8" viewBox="0 0 5 8"><path d="M4.5 0V8L0 4Z" fill="#666"/></svg>
<div class="a" style="left:734px;top:736px;width:368px;height:15px;background:#fff;border:1px solid #ababab"></div>
<div class="a" style="left:1133px;top:736px;width:15px;height:15px;background:#fff;border:1px solid #ababab"></div>
<svg style="left:1138px;top:740px" width="5" height="8" viewBox="0 0 5 8"><path d="M0.5 0V8L5 4Z" fill="#666"/></svg>
<!-- status -->
<div class="t" style="left:8px;top:763px;font-size:12px;color:#444;letter-spacing:-0.6px">Ready</div>
<div class="a" style="left:863px;top:758px;width:38px;height:21px;background:#c6c6c6"></div>
<svg style="left:874px;top:761px" width="14" height="13" viewBox="0 0 14 13"><path d="M0.5 0.5H13.5V12.5H0.5ZM0.5 4.5H13.5M0.5 8.5H13.5M4.8 0.5V12.5M9.2 0.5V12.5" fill="none" stroke="#666" stroke-width="1.2"/></svg>
<svg style="left:913px;top:761px" width="14" height="13" viewBox="0 0 14 13"><path d="M0.5 0.5H13.5V12.5H0.5Z" fill="none" stroke="#666" stroke-width="1.2"/><path d="M3.5 2.5H10.5V10.5H3.5Z" fill="none" stroke="#777" stroke-width="0.8"/><path d="M5 4.5H9M5 6.5H9M5 8.5H9" stroke="#777" stroke-width="0.8"/></svg>
<svg style="left:950px;top:761px" width="15" height="13" viewBox="0 0 15 13"><path d="M0.5 0.5H14.5V12.5H0.5Z M0.5 8.5H8.5V0.5 M4.5 8.5V0.5" fill="none" stroke="#666" stroke-width="1.2"/></svg>
<div class="a" style="left:982px;top:767px;width:7px;height:2px;background:#666"></div>
<div class="a" style="left:992px;top:767px;width:100px;height:1px;background:#999"></div>
<div class="a" style="left:1040px;top:762px;width:4px;height:11px;background:#666"></div>
<div class="a" style="left:1096px;top:767px;width:9px;height:2px;background:#666"></div>
<div class="a" style="left:1099.5px;top:763.5px;width:2px;height:9px;background:#666"></div>
<div class="t" style="left:1121px;top:763px;font-size:12px;color:#444;letter-spacing:-0.6px;word-spacing:-1px">100 %</div>
<div id="lb" class="a"></div>
<div id="rb" class="a"></div>
<div id="bb" class="a"></div>
<div class="red" style="left:-1px;top:250px;width:517px;height:38px"></div>
<div class="red" style="left:1px;top:348px;width:516px;height:41px"></div>
<!-- dropdown menu -->
<div class="a" style="left:884px;top:109px;width:174px;height:105px;background:rgba(0,0,0,0.10);filter:blur(1.5px)"></div>
<div class="a" style="left:884px;top:109px;width:173px;height:104px;background:#fff;border:1px solid #c6c6c6"></div>
<div class="a" style="left:885px;top:111px;width:170px;height:24px;background:#c6c6c6"></div>
<svg style="left:888px;top:114px" width="18" height="18" viewBox="0 0 18 18">
 <rect x="1.5" y="1.5" width="4" height="3" fill="#fff" stroke="#666"/><rect x="5.5" y="1.5" width="4" height="3" fill="#fff" stroke="#666"/>
 <rect x="4.5" y="6.5" width="5" height="3" fill="#c9ddf2" stroke="#666"/>
 <rect x="1.5" y="11" width="4" height="3" fill="#fff" stroke="#666"/><rect x="5.5" y="11" width="4" height="3" fill="#fff" stroke="#666"/>
 <rect x="1.5" y="14" width="4" height="3" fill="#fff" stroke="#666"/><rect x="5.5" y="14" width="4" height="3" fill="#fff" stroke="#666"/>
 <path d="M10 4.5L16.5 11M16.5 4.5L10 11" stroke="#e0603a" stroke-width="1.5"/>
</svg>
<div class="t" style="left:916px;top:117px;font-size:11.5px;color:#262626">Delete Cells...</div>
<div class="a" style="left:916px;top:128px;width:8px;height:1px;background:#262626"></div>
<svg style="left:888px;top:142px" width="18" height="14" viewBox="0 0 18 14">
 <path d="M1 1.5H4.5V3.5M4.5 10.5V12.5H1" fill="none" stroke="#555" stroke-width="1.1"/>
 <path d="M1 5.2H6L8 7L6 8.8H1Z" fill="#b7d3ee" stroke="#999" stroke-width="0.6"/>
 <path d="M8 3.5L16 11M16 3.5L8 11" stroke="#d9512c" stroke-width="2.2"/>
</svg>
<div class="t" style="left:916px;top:143px;font-size:11.5px;color:#444">Delete Sheet <u>R</u>ows</div>
<svg style="left:890px;top:164px" width="14" height="17" viewBox="0 0 14 17">
 <path d="M1.5 1V4.5H3.5M10.5 4.5H12.5V1" fill="none" stroke="#555" stroke-width="1.1"/>
 <path d="M5.2 1V5.5L7 7.5L8.8 5.5V1Z" fill="#b7d3ee" stroke="#999" stroke-width="0.6"/>
 <path d="M2 7.5L11 15.5M11 7.5L2 15.5" stroke="#d9512c" stroke-width="2.2"/>
</svg>
<div class="t" style="left:916px;top:167px;font-size:11.5px;color:#444">Delete Sheet <u>C</u>olumns</div>
<div class="a" style="left:917px;top:185px;width:137px;height:1px;background:#e1e1e1"></div>
<svg style="left:888px;top:191px" width="18" height="17" viewBox="0 0 18 17">
 <path d="M4.5 2V12M8.5 2V4.5M12.5 2V6M2 4.5H15M2 8.5H7M2 11.5H6" fill="none" stroke="#b4b4b4" stroke-width="1"/>
 <path d="M15.5 6V1.5H1.5V13.5H6" fill="none" stroke="#555" stroke-width="1.1"/>
 <path d="M7.5 7L16.5 15.5M16.5 7L7.5 15.5" stroke="#d9512c" stroke-width="2"/>
</svg>
<div class="t" style="left:916px;top:193px;font-size:11.5px;color:#444">Delete <u>S</u>heet</div>
<!-- red box around menu -->
<div class="red" style="left:873px;top:77px;width:193px;height:145px"></div>

</body></html>
